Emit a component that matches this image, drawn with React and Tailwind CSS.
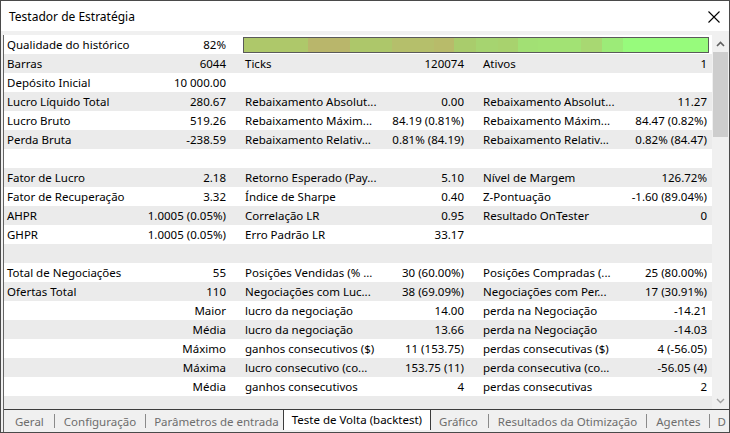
import React from "react";

const rows = [
  null,
  [["Barras", "6044"], ["Ticks", "120074"], ["Ativos", "1"]],
  [["Depósito Inicial", "10 000.00"], ["", ""], ["", ""]],
  [["Lucro Líquido Total", "280.67"], ["Rebaixamento Absolut...", "0.00"], ["Rebaixamento Absolut...", "11.27"]],
  [["Lucro Bruto", "519.26"], ["Rebaixamento Máxim...", "84.19 (0.81%)"], ["Rebaixamento Máxim...", "84.47 (0.82%)"]],
  [["Perda Bruta", "-238.59"], ["Rebaixamento Relativ...", "0.81% (84.19)"], ["Rebaixamento Relativ...", "0.82% (84.47)"]],
  [["", ""], ["", ""], ["", ""]],
  [["Fator de Lucro", "2.18"], ["Retorno Esperado (Pay...", "5.10"], ["Nível de Margem", "126.72%"]],
  [["Fator de Recuperação", "3.32"], ["Índice de Sharpe", "0.40"], ["Z-Pontuação", "-1.60 (89.04%)"]],
  [["AHPR", "1.0005 (0.05%)"], ["Correlação LR", "0.95"], ["Resultado OnTester", "0"]],
  [["GHPR", "1.0005 (0.05%)"], ["Erro Padrão LR", "33.17"], ["", ""]],
  [["", ""], ["", ""], ["", ""]],
  [["Total de Negociações", "55"], ["Posições Vendidas (% ...", "30 (60.00%)"], ["Posições Compradas (...", "25 (80.00%)"]],
  [["Ofertas Total", "110"], ["Negociações com Luc...", "38 (69.09%)"], ["Negociações com Per...", "17 (30.91%)"]],
  [["", "Maior"], ["lucro da negociação", "14.00"], ["perda na Negociação", "-14.21"]],
  [["", "Média"], ["lucro da negociação", "13.66"], ["perda na Negociação", "-14.03"]],
  [["", "Máximo"], ["ganhos consecutivos ($)", "11 (153.75)"], ["perdas consecutivas ($)", "4 (-56.05)"]],
  [["", "Máxima"], ["lucro consecutivo (co...", "153.75 (11)"], ["perda consecutiva (co...", "-56.05 (4)"]],
  [["", "Média"], ["ganhos consecutivos", "4"], ["perdas consecutivas", "2"]],
  [["", ""], ["", ""], ["", ""]],
];

const segs = [
  [64, "#aec86a"],
  [42, "#b9b66b"],
  [42, "#adc76a"],
  [42, "#b5bf6b"],
  [20, "#b8bb6a"],
  [22, "#a9cc6c"],
  [22, "#a6d470"],
  [20, "#a8d26e"],
  [20, "#a2e074"],
  [43, "#a2e274"],
  [21, "#a8d872"],
  [21, "#9ceb78"],
  [86, "#97fb7c"],
];

function Cell({ label, value, last }) {
  return (
    <div className={last ? "flex flex-1 min-w-0" : "flex w-[238px] shrink-0"}>
      <span className="pl-[3px] w-[140px] shrink-0 whitespace-nowrap overflow-hidden">{label}</span>
      <span className={"flex-1 text-right whitespace-nowrap " + (last ? "pr-[5px]" : "pr-[16px]")}>{value}</span>
    </div>
  );
}

function Row({ i, cells }) {
  const bg = i % 2 ? "bg-[#ebebeb]" : "bg-white";
  if (!cells) {
    return (
      <div className={"h-[19px] flex items-center shrink-0 " + bg}>
        <Cell label="Qualidade do histórico" value="82%" />
        <div className="flex h-[16px] w-[466px] border border-[#5a5a5a] ml-[1px] overflow-hidden">
          {segs.map(([w, c], k) => (
            <div key={k} className="h-full shrink-0" style={{ width: w, background: c }} />
          ))}
        </div>
      </div>
    );
  }
  return (
    <div className={"h-[19px] flex items-center shrink-0 " + bg}>
      <Cell label={cells[0][0]} value={cells[0][1]} />
      <Cell label={cells[1][0]} value={cells[1][1]} />
      <Cell label={cells[2][0]} value={cells[2][1]} last />
    </div>
  );
}

function Sep() {
  return <div className="w-[1px] h-[14px] bg-[#8a8a8a] shrink-0" />;
}

const tab = "flex items-center whitespace-nowrap shrink-0";

export default function App() {
  return (
    <div className="w-[730px] h-[433px] border border-[#4a4a4a] bg-white flex flex-col overflow-hidden text-[11.5px] text-[#000] font-['Noto_Sans',sans-serif] leading-[19px]">
      <div className="h-[30px] shrink-0 flex items-center justify-between pl-[8px] pr-[9px] bg-white">
        <span className="text-[12px] text-[#000]">Testador de Estratégia</span>
        <svg width="12" height="12" viewBox="0 0 12 12" className="mt-[1px]">
          <path d="M0.5 0.5 L11.5 11.5 M11.5 0.5 L0.5 11.5" stroke="#000" strokeWidth="1.1" fill="none" />
        </svg>
      </div>
      <div className="flex-1 flex flex-col bg-[#f0f0f0] pt-[4px] pl-[2px] min-h-0">
        <div className="flex-1 flex min-h-0 border-l border-[#646464]">
          <div className="flex-1 flex flex-col overflow-hidden bg-[#ebebeb]">
            {rows.map((r, i) => (
              <Row key={i} i={i} cells={r} />
            ))}
          </div>
          <div className="w-[17px] shrink-0 bg-[#f0f0f0] flex flex-col items-center">
            <div className="h-[17px] w-full flex items-center justify-center">
              <svg width="9" height="6" viewBox="0 0 9 6">
                <path d="M1 5 L4.5 1.5 L8 5" stroke="#606060" strokeWidth="1.6" fill="none" />
              </svg>
            </div>
            <div className="w-[15px] h-[85px] bg-[#cdcdcd]" />
            <div className="flex-1" />
            <div className="h-[17px] w-full flex items-center justify-center">
              <svg width="9" height="6" viewBox="0 0 9 6">
                <path d="M1 1 L4.5 4.5 L8 1" stroke="#a0a0a0" strokeWidth="1.4" fill="none" />
              </svg>
            </div>
          </div>
        </div>
        <div className="h-[23px] shrink-0 flex items-stretch border-l border-[#646464] overflow-hidden">
          <div className="flex-1 flex items-stretch border-t border-[#3c3c3c] text-[#6d6d6d] overflow-hidden">
            <div className={tab + " pl-[11px] pr-[10px]"}>Geral</div>
            <div className={tab}><Sep /></div>
            <div className={tab + " px-[9px]"}>Configuração</div>
            <div className={tab}><Sep /></div>
            <div className={tab + " pl-[8px] pr-[4px]"}>Parâmetros de entrada</div>
            <div className={tab + " px-[8px] bg-white text-[#000] border-x border-[#3c3c3c] -mt-[1px] mb-[2px]"}>Teste de Volta (backtest)</div>
            <div className={tab + " pl-[8px] pr-[10px]"}>Gráfico</div>
            <div className={tab}><Sep /></div>
            <div className={tab + " px-[9px]"}>Resultados da Otimização</div>
            <div className={tab}><Sep /></div>
            <div className={tab + " px-[9px]"}>Agentes</div>
            <div className={tab}><Sep /></div>
            <div className={tab + " pl-[7px]"}>D</div>
          </div>
        </div>
      </div>
    </div>
  );
}
